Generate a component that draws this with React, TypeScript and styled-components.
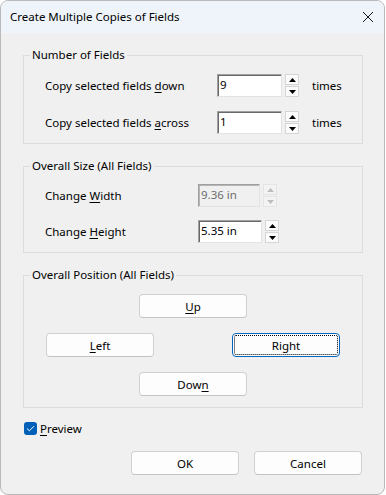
import React from 'react'
import styled, { createGlobalStyle } from 'styled-components'

const GlobalStyle = createGlobalStyle`
  html, body {
    margin: 0;
    background: #ffffff;
  }
  body {
    font-family: "Noto Sans", "Segoe UI", sans-serif;
    font-size: 11.5px;
    color: #000000;
  }
`

const Window = styled.div`
  width: 385px;
  height: 495px;
  box-sizing: border-box;
  border: 1px solid #b9b9b9;
  border-radius: 8px;
  overflow: hidden;
  background: #f0f0f0;
  display: flex;
  flex-direction: column;
`

const TitleBar = styled.div`
  height: 32px;
  flex-shrink: 0;
  background: #eef4f9;
  display: flex;
  align-items: center;
  justify-content: space-between;
  padding: 0 9px 0 9px;
`

const Title = styled.span`
  line-height: 16px;
`

const CloseButton = styled.div`
  width: 14px;
  height: 14px;
  display: flex;
  align-items: center;
  justify-content: center;
`

const Body = styled.div`
  display: flex;
  flex-direction: column;
  padding: 14px 21px 0 22px;
`

const Group = styled.fieldset<{ $gap: number; $top: number; $bottom: number }>`
  margin: 0 0 14px 0;
  padding: ${(p) => p.$top}px 0 ${(p) => p.$bottom}px 6px;
  border: 1px solid #dcdcdc;
  display: flex;
  flex-direction: column;
  gap: ${(p) => p.$gap}px;
`

const Legend = styled.legend`
  padding: 0 2px;
  line-height: 16px;
`

const Row = styled.div`
  display: flex;
  align-items: center;
  height: 23px;
  padding-left: 15px;
`

const Label = styled.span<{ $width: number }>`
  width: ${(p) => p.$width}px;
  flex-shrink: 0;
`

const TextBox = styled.div<{ $width: number; $disabled?: boolean }>`
  width: ${(p) => p.$width}px;
  height: 23px;
  box-sizing: border-box;
  border-style: solid;
  border-width: 1px;
  border-color: #a0a0a0 #e3e3e3 #e3e3e3 #a0a0a0;
  box-shadow: inset 1px 1px 0 ${(p) => (p.$disabled ? '#b5b5b5' : '#696969')};
  background: ${(p) => (p.$disabled ? '#f0f0f0' : '#ffffff')};
  color: ${(p) => (p.$disabled ? '#6d6d6d' : '#000000')};
  padding: 1px 0 0 2px;
  line-height: 18px;
  flex-shrink: 0;
`

const Spinner = styled.div`
  display: flex;
  flex-direction: column;
  gap: 1px;
  margin-left: 3px;
  flex-shrink: 0;
`

const SpinButton = styled.div<{ $disabled?: boolean }>`
  width: 14px;
  height: 11px;
  box-sizing: border-box;
  border: 1px solid ${(p) => (p.$disabled ? '#e4e4e4' : '#d6d6d6')};
  background: ${(p) => (p.$disabled ? '#f3f3f3' : '#fbfbfb')};
  display: flex;
  align-items: center;
  justify-content: center;
`

const Suffix = styled.span`
  margin-left: 13px;
`

const Key = styled.span`
  text-decoration: underline;
  text-underline-offset: 2px;
`

const Pad = styled.div`
  display: flex;
  flex-direction: column;
  align-items: center;
  gap: 15px;
  padding: 0 22px 0 16px;
`

const PadRow = styled.div`
  width: 100%;
  display: flex;
  justify-content: space-between;
`

const Button = styled.button<{ $focused?: boolean }>`
  width: 108px;
  height: 24px;
  box-sizing: border-box;
  font-family: inherit;
  font-size: 11.5px;
  color: #000000;
  background: #fdfdfd;
  border: 1px solid ${(p) => (p.$focused ? '#0067c0' : '#d0d0d0')};
  border-bottom-color: ${(p) => (p.$focused ? '#0067c0' : '#c4c4c4')};
  border-radius: 4px;
  padding: 0;
  position: relative;
  display: flex;
  align-items: center;
  justify-content: center;

  ${(p) =>
    p.$focused &&
    `
    &::after {
      content: '';
      position: absolute;
      inset: 1px;
      border: 1px dotted #000000;
      border-radius: 2px;
    }
  `}
`

const CheckRow = styled.label`
  display: flex;
  align-items: center;
  gap: 3px;
  height: 16px;
  margin-top: -2px;
  margin-left: 1px;
`

const CheckBox = styled.span`
  width: 13px;
  height: 13px;
  border-radius: 3px;
  background: #005fb8;
  display: flex;
  align-items: center;
  justify-content: center;
`

const Footer = styled.div`
  display: flex;
  justify-content: flex-end;
  gap: 15px;
  margin: 15px 1px 0 0;
`

const Arrow = ({ up, disabled }: { up?: boolean; disabled?: boolean }) => (
  <svg width="7" height="4" viewBox="0 0 7 4">
    <polygon
      points={up ? '3.5,0 7,4 0,4' : '0,0 7,0 3.5,4'}
      fill={disabled ? '#bdbdbd' : '#000000'}
    />
  </svg>
)

const SpinBox = ({ disabled }: { disabled?: boolean }) => (
  <Spinner>
    <SpinButton $disabled={disabled}>
      <Arrow up disabled={disabled} />
    </SpinButton>
    <SpinButton $disabled={disabled}>
      <Arrow disabled={disabled} />
    </SpinButton>
  </Spinner>
)

function App() {
  return (
    <>
      <GlobalStyle />
      <Window>
        <TitleBar>
          <Title>Create Multiple Copies of Fields</Title>
          <CloseButton>
            <svg width="12" height="12" viewBox="0 0 12 12">
              <path d="M1 1 L11 11 M11 1 L1 11" stroke="#1a1a1a" strokeWidth="1" />
            </svg>
          </CloseButton>
        </TitleBar>
        <Body>
          <Group $gap={14} $top={11} $bottom={9}>
            <Legend>Number of Fields</Legend>
            <Row>
              <Label $width={172}>
                Copy selected fields <Key>d</Key>own
              </Label>
              <TextBox $width={65}>9</TextBox>
              <SpinBox />
              <Suffix>times</Suffix>
            </Row>
            <Row>
              <Label $width={172}>
                Copy selected fields <Key>a</Key>cross
              </Label>
              <TextBox $width={65}>1</TextBox>
              <SpinBox />
              <Suffix>times</Suffix>
            </Row>
          </Group>

          <Group $gap={13} $top={10} $bottom={9}>
            <Legend>Overall Size (All Fields)</Legend>
            <Row>
              <Label $width={153}>
                Change <Key>W</Key>idth
              </Label>
              <TextBox $width={62} $disabled>
                9.36 in
              </TextBox>
              <SpinBox disabled />
            </Row>
            <Row>
              <Label $width={153}>
                Change <Key>H</Key>eight
              </Label>
              <TextBox $width={64}>5.35 in</TextBox>
              <SpinBox />
            </Row>
          </Group>

          <Group $gap={0} $top={11} $bottom={11}>
            <Legend>Overall Position (All Fields)</Legend>
            <Pad>
              <Button>
                <Key>U</Key>p
              </Button>
              <PadRow>
                <Button>
                  <Key>L</Key>eft
                </Button>
                <Button $focused>
                  Ri<Key>g</Key>ht
                </Button>
              </PadRow>
              <Button>
                Dow<Key>n</Key>
              </Button>
            </Pad>
          </Group>

          <CheckRow>
            <CheckBox>
              <svg width="9" height="7" viewBox="0 0 9 7">
                <path d="M1 3.5 L3.4 5.8 L8 1.2" stroke="#ffffff" strokeWidth="1" fill="none" />
              </svg>
            </CheckBox>
            <span>
              <Key>P</Key>review
            </span>
          </CheckRow>

          <Footer>
            <Button>OK</Button>
            <Button>Cancel</Button>
          </Footer>
        </Body>
      </Window>
    </>
  )
}

export default App
